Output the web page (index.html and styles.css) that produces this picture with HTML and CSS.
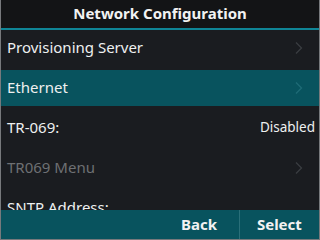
FILE: index.html
```html
<!DOCTYPE html>
<html lang="en">
<head>
    <meta charset="UTF-8">
    <title>Network Configuration</title>
    <link rel="stylesheet" href="styles.css">
</head>
<body>
    <div class="screen">
        <div class="title">Network Configuration</div>
        <div class="list">
            <div class="row">
                <span class="label">Provisioning Server</span>
                <svg class="chev" viewBox="0 0 8 12"><path d="M1 0.5 L6.5 6 L1 11.5"/></svg>
            </div>
            <div class="row active">
                <span class="label">Ethernet</span>
                <svg class="chev" viewBox="0 0 8 12"><path d="M1 0.5 L6.5 6 L1 11.5"/></svg>
            </div>
            <div class="row">
                <span class="label">TR-069:</span>
                <span class="value">Disabled</span>
            </div>
            <div class="row disabled">
                <span class="label">TR069 Menu</span>
                <svg class="chev" viewBox="0 0 8 12"><path d="M1 0.5 L6.5 6 L1 11.5"/></svg>
            </div>
            <div class="row">
                <span class="label">SNTP Address:</span>
            </div>
        </div>
        <div class="softkeys">
            <div class="key"></div>
            <div class="key"></div>
            <div class="key">Back</div>
            <div class="key">Select</div>
        </div>
    </div>
</body>
</html>
```

FILE: styles.css
```css
body {
    margin: 0;
    background: #1a1c20;
    font-family: "Noto Sans", "Open Sans", sans-serif;
    color: #eef0f0;
}
.screen {
    width: 320px;
    height: 240px;
    box-sizing: border-box;
    border: 1px solid #77797c;
    border-top: none;
    display: flex;
    flex-direction: column;
    overflow: hidden;
    background: #1a1c20;
}
.title {
    height: 28px;
    flex: none;
    background: #131416;
    border-bottom: 2px solid #0f8596;
    text-align: center;
    font-weight: bold;
    font-size: 15px;
    line-height: 27px;
    color: #f2f2f2;
}
.list {
    flex: 1;
    overflow: hidden;
}
.row {
    height: 36px;
    margin-bottom: 4px;
    display: flex;
    align-items: center;
    padding: 0 6px 0 6px;
    font-size: 15px;
}
.row.active {
    background: #08535e;
}
.row.disabled .label {
    color: #6e7073;
}
.label {
    flex: 1;
    margin-top: -3px;
}
.value {
    font-size: 13.5px;
    margin-top: -3px;
    margin-right: -2px;
}
.chev {
    width: 8px;
    height: 12px;
    margin-right: 10px;
    fill: none;
    stroke: #3a3d41;
    stroke-width: 1.3;
}
.row.active .chev {
    stroke: #1e6b76;
}
.softkeys {
    height: 29px;
    flex: none;
    display: flex;
    background: #08535e;
}
.key {
    flex: 1;
    text-align: center;
    font-weight: bold;
    font-size: 15px;
    line-height: 28px;
    color: #f2f2f2;
}
.key + .key:last-child {
    border-left: 1px solid #2a6f79;
}
```
